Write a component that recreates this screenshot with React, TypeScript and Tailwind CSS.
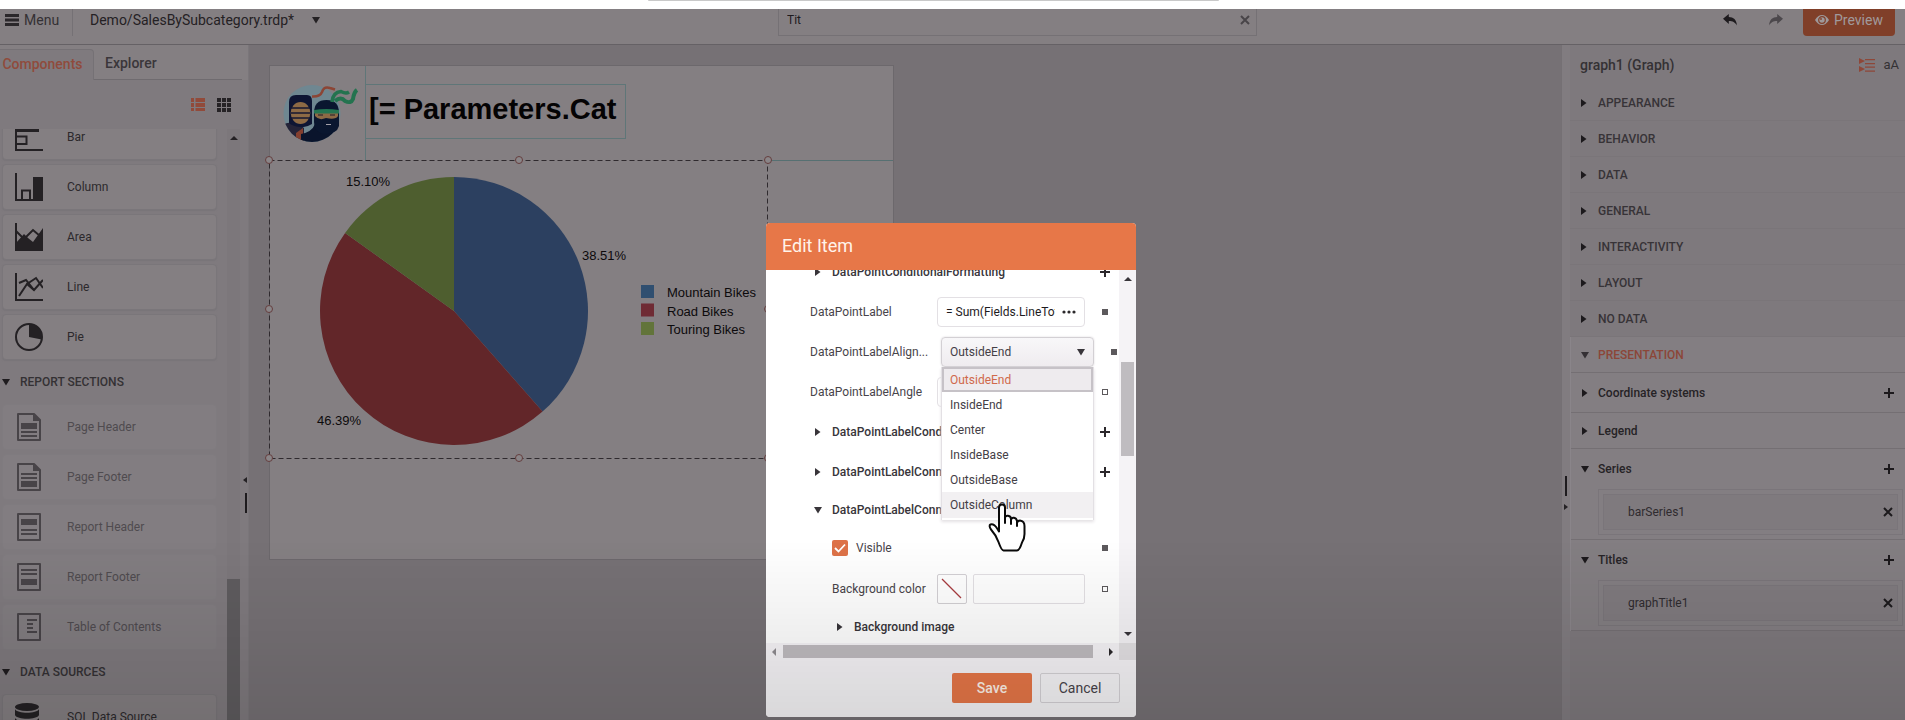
import React from "react";

const chartGlyphs: Record<string, React.ReactNode> = {
  Bar: (
    <>
      <path d="M1 0V27H28" fill="none" stroke="currentColor" strokeWidth="2" />
      <path d="M1 5H24V9H1z" fill="currentColor" />
      <path d="M1 13.5H11.5V21H1" fill="none" stroke="currentColor" strokeWidth="2" />
    </>
  ),
  Column: (
    <>
      <path d="M1 0V27H28" fill="none" stroke="currentColor" strokeWidth="2" />
      <path d="M7 27V17.5H15V27" fill="none" stroke="currentColor" strokeWidth="2" />
      <path d="M18 4H28V28H18z" fill="currentColor" />
    </>
  ),
  Area: (
    <>
      <path d="M1 0V28" stroke="currentColor" strokeWidth="2" />
      <path d="M1 20L9 11L13 15L18 19L28 5V28H0z" fill="currentColor" />
      <path d="M1 8L8 15M11 14L18 7L25 13" fill="none" stroke="currentColor" strokeWidth="2" />
    </>
  ),
  Line: (
    <>
      <path d="M1 0V27H28" fill="none" stroke="currentColor" strokeWidth="2" />
      <path d="M4 23L12 11L19 17L28 7" fill="none" stroke="currentColor" strokeWidth="2" />
      <path d="M4 10L11 7L19 17M12 11L21 5L28 15" fill="none" stroke="currentColor" strokeWidth="2" />
    </>
  ),
  Pie: (
    <>
      <circle cx="14" cy="14" r="13" fill="none" stroke="currentColor" strokeWidth="2" />
      <path d="M14 14V1A13 13 0 0 1 26.7 16.5z" fill="currentColor" />
    </>
  ),
  "Page Header": (
    <>
      <path d="M3 1H19L25 7V27H3z" fill="none" stroke="currentColor" strokeWidth="2" strokeLinejoin="round" />
      <path d="M18 1V8H26z" fill="currentColor" />
      <path d="M6 10H22V16H6z" fill="currentColor" />
      <path d="M6 19H22M6 23H22" stroke="currentColor" strokeWidth="2" />
    </>
  ),
  "Page Footer": (
    <>
      <path d="M3 1H19L25 7V27H3z" fill="none" stroke="currentColor" strokeWidth="2" strokeLinejoin="round" />
      <path d="M18 1V8H26z" fill="currentColor" />
      <path d="M6 18H22V24H6z" fill="currentColor" />
      <path d="M6 11H22M6 15H22" stroke="currentColor" strokeWidth="2" />
    </>
  ),
  "Report Header": (
    <>
      <path d="M3 1H25V27H3z" fill="none" stroke="currentColor" strokeWidth="2" strokeLinejoin="round" />
      <path d="M6 6H22V12H6z" fill="currentColor" />
      <path d="M6 17H22M6 21H22" stroke="currentColor" strokeWidth="2" />
    </>
  ),
  "Report Footer": (
    <>
      <path d="M3 1H25V27H3z" fill="none" stroke="currentColor" strokeWidth="2" strokeLinejoin="round" />
      <path d="M6 16H22V22H6z" fill="currentColor" />
      <path d="M6 7H22M6 11H22" stroke="currentColor" strokeWidth="2" />
    </>
  ),
  "Table of Contents": (
    <>
      <path d="M3 1H25V27H3z" fill="none" stroke="currentColor" strokeWidth="2" strokeLinejoin="round" />
      <path d="M12 7H22M12 11H18M12 15H18M12 19H22" stroke="currentColor" strokeWidth="2" />
    </>
  ),
  "SQL Data Source": (
    <>
      <ellipse cx="12" cy="4" rx="12" ry="4" fill="currentColor" />
      <path d="M0 6C2 11 22 11 24 6V12C22 17 2 17 0 12z" fill="currentColor" />
      <path d="M0 15C2 20 22 20 24 15V22C22 27 2 27 0 22z" fill="currentColor" />
    </>
  ),
};

function Caret({ open, className = "" }: { open?: boolean; className?: string }) {
  return (
    <svg viewBox="0 0 8 8" className={`h-2 w-2 shrink-0 ${className}`} fill="currentColor" aria-hidden="true">
      {open ? <path d="M0 1H8L4 7.5z" /> : <path d="M1 0L6.5 4L1 8z" />}
    </svg>
  );
}

function Plus() {
  return (
    <svg viewBox="0 0 10 10" className="h-2.5 w-2.5" stroke="currentColor" strokeWidth="2" aria-hidden="true">
      <path d="M5 0V10M0 5H10" />
    </svg>
  );
}

function Cross() {
  return (
    <svg viewBox="0 0 10 10" className="h-2.5 w-2.5" stroke="currentColor" strokeWidth="2" aria-hidden="true">
      <path d="M1 1L9 9M9 1L1 9" />
    </svg>
  );
}

function ToolItem({ name, disabled }: { name: string; disabled?: boolean }) {
  return (
    <button
      type="button"
      disabled={disabled}
      className={
        disabled
          ? "flex h-[46px] w-full shrink-0 items-center rounded-sm border border-[#7f7b7f] bg-[#827d81] pl-3 text-xs text-[#4f4b4f]"
          : "flex h-[46px] w-full shrink-0 items-center rounded-sm border border-[#7a767a] bg-[#847f82] pl-3 text-xs text-[#2c292c] shadow-[0_1px_1px_#797579]"
      }
    >
      <svg viewBox="0 0 28 28" className={disabled ? "mr-6 h-7 w-7 shrink-0 text-[#484448]" : "mr-6 h-7 w-7 shrink-0 text-[#242124]"} aria-hidden="true">
        {chartGlyphs[name]}
      </svg>
      {name}
    </button>
  );
}

function ToolSection({ title }: { title: string }) {
  return (
    <button type="button" className="flex h-11 shrink-0 items-center gap-2.5 text-xs font-medium text-[#343134]">
      <Caret open className="text-[#1f1c1f]" />
      {title}
    </button>
  );
}

function Toolbox() {
  return (
    <aside className="relative flex w-[249px] shrink-0 flex-col border-r border-[#7a767a] bg-[#7f7a7e]">
      <div role="tablist" className="flex h-[35px] shrink-0 items-end bg-[#847f82] pr-1.5 text-sm font-medium">
        <button role="tab" aria-selected="true" type="button" className="h-[31px] w-[94px] rounded-tr border-t border-r border-[#757175] bg-[#7f7a7e] pr-2 pb-0.5 text-center text-[#904b3c]">
          Components
        </button>
        <button role="tab" aria-selected="false" type="button" className="h-[31px] flex-1 border-b border-[#6f6b6f] pb-0.5 pl-[11px] text-left text-[#3a363a]">
          Explorer
        </button>
      </div>
      <div className="flex h-[49px] shrink-0 items-center justify-end gap-3 pr-[17px]">
        <button type="button" aria-label="List view" className="text-[#914a3a]">
          <svg viewBox="0 0 14 14" className="h-3.5 w-3.5" fill="currentColor">
            <path d="M0 0H3V4H0zM4.500 0H14V4H4.500zM0 5H3V9H0zM4.500 5H14V9H4.500zM0 10H3V13H0zM4.500 10H14V13H4.500z" />
          </svg>
        </button>
        <button type="button" aria-label="Grid view" className="text-[#262326]">
          <svg viewBox="0 0 14 14" className="h-3.5 w-3.5" fill="currentColor">
            <path d="M0 0H4V4H0zM5 0H9V4H5zM10 0H14V4H10zM0 5H4V9H0zM5 5H9V9H5zM10 5H14V9H10zM0 10H4V14H0zM5 10H9V14H5zM10 10H14V14H10z" />
          </svg>
        </button>
      </div>
      <div className="flex min-h-0 flex-1">
        <div className="flex flex-1 flex-col overflow-hidden pr-2.5 pl-0.5">
          <div className="-mt-[15px] flex flex-col gap-1">
            <ToolItem name="Bar" />
            <ToolItem name="Column" />
            <ToolItem name="Area" />
            <ToolItem name="Line" />
            <ToolItem name="Pie" />
          </div>
          <ToolSection title="REPORT SECTIONS" />
          <div className="flex flex-col gap-1">
            <ToolItem name="Page Header" disabled />
            <ToolItem name="Page Footer" disabled />
            <ToolItem name="Report Header" disabled />
            <ToolItem name="Report Footer" disabled />
            <ToolItem name="Table of Contents" disabled />
          </div>
          <ToolSection title="DATA SOURCES" />
          <ToolItem name="SQL Data Source" />
        </div>
        <div className="flex w-[13px] flex-col items-center bg-[#7c777b] pt-[7px]">
          <svg viewBox="0 0 8 4" className="h-1 w-2" fill="#242124">
            <path d="M0 4L4 0L8 4z" />
          </svg>
          <div className="mt-auto h-[141px] w-full bg-[#5f5c5f]" />
        </div>
        <div className="flex w-2 flex-col items-end bg-[#7f7a7e] pt-[348px] pr-px">
          <svg viewBox="0 0 4 6" className="h-1.5 w-1" fill="#242124">
            <path d="M4 0V6L0 3z" />
          </svg>
          <div className="mt-2.5 h-5 w-0.5 bg-[#1e1b1e]" />
        </div>
      </div>
    </aside>
  );
}

function Logo() {
  return (
    <svg viewBox="0 0 100 90" className="h-[90px] w-[100px] shrink-0" aria-label="Ninja logo">
      <defs>
        <clipPath id="disc">
          <circle cx="42" cy="47.500" r="28.500" />
        </clipPath>
      </defs>
      <circle cx="42" cy="47.500" r="28.500" fill="#6f8791" />
      <g clipPath="url(#disc)">
        <path d="M14 58Q24 54 34 62L34 78H24L14 68z" fill="#242338" />
        <path d="M26 67L33 62V78H26z" fill="#843f2f" />
        <path d="M31 78V68Q42 66 45 58H69V66Q60 78 42 78z" fill="#0a142c" />
      </g>
      <path d="M19 36Q19 29 26 29H37Q42 29 42 35V58Q36 62 30 61Q22 60 19 57z" fill="#0e1533" />
      <ellipse cx="30.500" cy="47" rx="9.800" ry="11" fill="#8d6a45" />
      <path d="M21 42H40M21 47H40M21 52H40" stroke="#161730" strokeWidth="1.300" />
      <path d="M44 47Q44 34 56.500 34Q69 34 69 47V60Q67 68 54 68Q44 66 44 56z" fill="#0a162f" />
      <path d="M45 47H68V50Q66 54 56 52Q49 55 45 50z" fill="#8d6a45" />
      <path d="M44 44Q56 42 69 44V47.500H44z" fill="#247552" />
      <path d="M48 49H53M60 49H65" stroke="#1c1c2c" strokeWidth="1" />
      <path d="M56 58.500H61" stroke="#a5a1aa" strokeWidth="1" />
      <path d="M42 30.500Q50 31 52 26Q54 20 60 22L65 23.500" fill="none" stroke="#8c4535" strokeWidth="2.500" />
      <path d="M62 36Q63 26 71 25.500Q76 28 79 26" fill="none" stroke="#24734f" strokeWidth="3.500" />
      <path d="M65 35Q71 30 75 35Q81 38 83 33Q84 26 87 24" fill="none" stroke="#24734f" strokeWidth="4" />
    </svg>
  );
}

const slices = [
  { name: "Mountain Bikes", share: 38.51, color: "#2c4060" },
  { name: "Road Bikes", share: 46.39, color: "#622629" },
  { name: "Touring Bikes", share: 15.1, color: "#4e5e2f" },
];
const legendColors = ["#304f70", "#6f2b34", "#62743a"];

function wedge(start: number, share: number) {
  const cx = 185;
  const cy = 151;
  const r = 134;
  const a = (start / 100) * 2 * Math.PI;
  const b = ((start + share) / 100) * 2 * Math.PI;
  const p = (t: number) => `${(cx + r * Math.sin(t)).toFixed(2)} ${(cy - r * Math.cos(t)).toFixed(2)}`;
  return `M${cx} ${cy}L${p(a)}A${r} ${r} 0 ${share > 50 ? 1 : 0} 1 ${p(b)}z`;
}

function Graph() {
  let start = 0;
  return (
    <svg viewBox="0 0 500 300" className="h-[300px] w-[500px] overflow-visible font-['Liberation_Sans',sans-serif] text-[13px]">
      {slices.map((s) => {
        const d = wedge(start, s.share);
        start += s.share;
        return <path key={s.name} d={d} fill={s.color} />;
      })}
      <g fill="#0c0a0c">
        <text x="77" y="26">15.10%</text>
        <text x="313" y="100">38.51%</text>
        <text x="48" y="265">46.39%</text>
      </g>
      {slices.map((s, i) => (
        <g key={s.name}>
          <rect x="372" y={125 + i * 18.5} width="13" height="13" fill={legendColors[i]} />
          <text x="398" y={137 + i * 18.5} fill="#0c0a0c">{s.name}</text>
        </g>
      ))}
      <rect x="0.5" y="0.5" width="498" height="298" fill="none" stroke="#2f2a2e" strokeDasharray="5 3" />
      {[[0, 0], [250, 0], [499, 0], [0, 149], [499, 149], [0, 298], [250, 298], [499, 298]].map(([x, y]) => (
        <circle key={`${x}-${y}`} cx={x} cy={y} r="3.500" fill="#8a8588" stroke="#653e3e" />
      ))}
    </svg>
  );
}

function Designer() {
  return (
    <main className="flex-1 overflow-hidden bg-[#767175] pt-5 pl-5">
      <div className="relative h-[495px] w-[625px] border border-[#6c686c] bg-[#847f82]">
        <div className="absolute top-0 left-0 flex h-[95px] w-[96px] border-r border-[#5f7678]">
          <Logo />
        </div>
        <div className="absolute top-[18px] left-[95px] flex h-[55px] w-[261px] items-center border border-[#5f7678] pb-1 pl-[3px] font-['Liberation_Sans',sans-serif] text-[29px] font-bold whitespace-nowrap text-[#040304]">
          [= Parameters.Cat
        </div>
        <div className="absolute top-[94px] right-0 left-[498px] h-px bg-[#567072]" />
        <div className="absolute top-[94px] -left-px">
          <Graph />
        </div>
      </div>
    </main>
  );
}

function SeriesBox({ name }: { name: string }) {
  return (
    <div className="mr-0.5 mb-1 ml-[27px] border border-[#7a757a] p-1">
      <div className="flex h-9 items-center justify-between border border-[#7a757a] bg-[#7f7a7e] pr-1 pl-6 text-xs text-[#2f2b2f]">
        {name}
        <button type="button" aria-label={`Remove ${name}`} className="text-[#1d1a1d]">
          <Cross />
        </button>
      </div>
    </div>
  );
}

function Group({ title, open, add, height, children }: { title: string; open?: boolean; add?: boolean; height: string; children?: React.ReactNode }) {
  return (
    <div className="border-b border-[#746f73]">
      <div className={`flex items-center pr-[11px] pl-2.5 text-xs font-medium text-[#262326] ${height}`}>
        <button type="button" className="flex flex-1 items-center gap-[9px] text-left">
          <Caret open={open} className="text-[#1c191c]" />
          {title}
        </button>
        {add && (
          <button type="button" aria-label={`Add ${title}`} className="text-[#1c191c]">
            <Plus />
          </button>
        )}
      </div>
      {children}
    </div>
  );
}

function Properties() {
  return (
    <aside className="flex w-[344px] shrink-0 border-l border-[#757074] bg-[#7e797d]">
      <div className="flex w-2 shrink-0 flex-col items-center bg-[#817c80] pt-[431px]">
        <div className="h-5 w-0.5 bg-[#1e1b1e]" />
        <svg viewBox="0 0 4 6" className="mt-2 h-1.5 w-1" fill="#242124">
          <path d="M0 0V6L4 3z" />
        </svg>
      </div>
      <div className="flex min-w-0 flex-1 flex-col">
        <div className="flex h-10 shrink-0 items-center pr-1.5 pl-2.5 text-[#343134]">
          <h2 className="flex-1 text-sm font-medium">graph1 (Graph)</h2>
          <button type="button" aria-label="Group by category" className="mr-2 text-[#8e4738]">
            <svg viewBox="0 0 16 14" className="h-3.5 w-4" fill="currentColor">
              <path d="M0 0L6 3L0 6zM0 8L6 11L0 14zM6 1H16V2.200H6zM6 5H16V6.200H6zM6 8.500H16V9.700H6zM6 12.500H16V13.700H6z" />
            </svg>
          </button>
          <button type="button" aria-label="Sort alphabetically" className="text-[13px]">aA</button>
        </div>
        {["APPEARANCE", "BEHAVIOR", "DATA", "GENERAL", "INTERACTIVITY", "LAYOUT", "NO DATA"].map((t) => (
          <button key={t} type="button" className="flex h-9 shrink-0 items-center gap-2.5 border-b border-[#7a7579] pl-2.5 text-xs font-medium text-[#373337]">
            <Caret className="text-[#1c191c]" />
            {t}
          </button>
        ))}
        <div className="border-l border-[#8a858a] bg-[#837e82]">
          <button type="button" className="flex h-9 w-full items-center gap-[9px] border-b border-[#746f73] pl-2.5 text-xs font-medium text-[#8c4638]">
            <Caret open className="text-[#343034]" />
            PRESENTATION
          </button>
          <Group title="Coordinate systems" add height="h-[39px]" />
          <Group title="Legend" height="h-[35px]" />
          <Group title="Series" open add height="h-10">
            <SeriesBox name="barSeries1" />
          </Group>
          <Group title="Titles" open add height="h-10">
            <SeriesBox name="graphTitle1" />
          </Group>
        </div>
      </div>
    </aside>
  );
}

function TopBar() {
  return (
    <header className="h-9 shrink-0 overflow-hidden border-b border-[#656165] bg-[#847f82]">
      <div className="-mt-[5px] grid h-8 grid-cols-[778fr_479fr_648fr] items-center">
        <div className="flex h-full items-center text-sm text-[#343134]">
          <button type="button" className="flex h-full w-[72px] items-center gap-[5px] pl-[5px]">
            <svg viewBox="0 0 14 12" className="h-3 w-3.5" fill="#2a272a" aria-hidden="true">
              <path d="M0 0H14V3H0zM0 4.500H14V7.500H0zM0 9H14V12H0z" />
            </svg>
            Menu
          </button>
          <span className="h-full w-px bg-[#757175]" />
          <button type="button" className="ml-[17px] flex items-center gap-[18px] text-[#242124]">
            Demo/SalesBySubcategory.trdp*
            <Caret open />
          </button>
        </div>
        <div className="flex h-full items-center border border-[#757175] pr-1.5 pl-2">
          <input aria-label="Search" defaultValue="Tit" className="min-w-0 flex-1 bg-transparent text-xs text-[#1e1b1e] outline-none" />
          <button type="button" aria-label="Clear search" className="text-[#494549]">
            <Cross />
          </button>
        </div>
        <div className="flex h-full items-center justify-end pr-2.5">
          <button type="button" aria-label="Undo" className="mr-8 text-[#1e1b1e]">
            <svg viewBox="0 0 14 12" className="h-3 w-3.5" fill="currentColor">
              <path d="M0 4.800L5.800 0V3C10.500 3.100 13.500 5.500 14 11.500C12 8.200 9.800 7 5.800 7V10z" />
            </svg>
          </button>
          <button type="button" aria-label="Redo" className="mr-5 text-[#4c484c]">
            <svg viewBox="0 0 14 12" className="h-3 w-3.5" fill="currentColor">
              <path d="M14 4.800L8.200 0V3C3.500 3.100 0.500 5.500 0 11.500C2 8.200 4.200 7 8.200 7V10z" />
            </svg>
          </button>
          <button type="button" className="flex h-full w-[92px] items-center justify-center gap-[5px] rounded-sm bg-[#803f29] text-sm text-[#a09a9c]">
            <svg viewBox="0 0 14 10" className="h-2.5 w-3.5" aria-hidden="true">
              <path d="M0 5Q3 0 7 0T14 5Q11 10 7 10T0 5z" fill="#9e989a" />
              <circle cx="7" cy="5" r="3.300" fill="none" stroke="#803f29" strokeWidth="1.200" />
              <circle cx="6" cy="4" r="0.900" fill="#803f29" />
            </svg>
            Preview
          </button>
        </div>
      </div>
    </header>
  );
}

function Marker({ filled }: { filled?: boolean }) {
  return <span className={filled ? "block h-1.5 w-1.5 bg-[#5c595c]" : "block h-1.5 w-1.5 border border-[#5c595c]"} />;
}

function Row({ children, end, className = "h-10" }: { children: React.ReactNode; end?: React.ReactNode; className?: string }) {
  return (
    <div className={`flex shrink-0 items-center ${className}`}>
      {children}
      {end && <div className="ml-auto flex w-7 justify-center">{end}</div>}
    </div>
  );
}

function TreeToggle({ title, open }: { title: string; open?: boolean }) {
  return (
    <button type="button" className="flex items-center gap-2.5 pl-1 font-medium text-[#38353a]">
      <Caret open={open} />
      {title}
    </button>
  );
}

const addButton = (
  <button type="button" aria-label="Add" className="text-[#2b282b]">
    <Plus />
  </button>
);

function AlignmentSelect() {
  const options = ["OutsideEnd", "InsideEnd", "Center", "InsideBase", "OutsideBase", "OutsideColumn"];
  return (
    <div className="relative">
      <select
        id="label-alignment"
        defaultValue="OutsideEnd"
        className="block h-[30px] w-[153px] appearance-none rounded-sm border border-[#d3d0d4] bg-linear-to-b from-[#f8f7f9] to-[#efecef] pl-2 text-xs text-[#444046] shadow-[0_0_2px_#d8d5d8] outline-none"
      >
        {options.map((o) => (
          <option key={o}>{o}</option>
        ))}
      </select>
      <Caret open className="pointer-events-none absolute top-[11px] right-[9px] text-[#38353a]" />
      <ul role="listbox" aria-label="Alignment options" className="absolute top-[30px] left-0 z-10 w-[153px] border-x border-[#e3e0e4] bg-white pb-0.5 text-[#444046] shadow-[0_2px_3px_#e4e1e4]">
        {options.map((o, i) => (
          <li
            key={o}
            role="option"
            aria-selected={i === 0}
            className={
              i === 0
                ? "flex h-[25px] items-center border-2 border-[#c6c2c7] bg-[#eeebee] pl-1.5 text-[#d0694b]"
                : i === 5
                  ? "flex h-[26px] items-center bg-[#f2f0f2] pl-2"
                  : "flex h-[25px] items-center pl-2"
            }
          >
            {o}
          </li>
        ))}
      </ul>
      <svg viewBox="0 0 38 49" className="absolute top-[166px] left-[47px] z-20 h-[49px] w-[38px]" aria-hidden="true">
        <path
          d="M11 25V4.500Q11 1.500 14 1.500T17 4.500V20V15.500Q17 12.500 20 12.800T23 16V21V17Q23.500 14.500 26 14.800T29 18V23V20Q29.500 17.500 32 17.500Q36.500 18 36.500 23V31Q36.500 36 34 39.500Q31.500 47.500 29 47.500H15.500Q13.500 47.500 10.500 39Q8 32 3 26.500Q0.500 22.500 2.500 21.500Q6 20.500 9.500 26L11 28.500z"
          fill="#fff"
          stroke="#0a0a0a"
          strokeWidth="2"
          strokeLinejoin="round"
        />
      </svg>
    </div>
  );
}

function EditDialog() {
  return (
    <section role="dialog" aria-labelledby="dialog-title" className="flex w-[370px] flex-col overflow-hidden rounded-sm bg-white text-xs text-[#48444a]">
      <h1 id="dialog-title" className="flex h-[47px] shrink-0 items-center bg-[#e77748] pb-0.5 pl-4 text-lg text-[#fff3ea]">
        Edit Item
      </h1>
      <div className="flex h-[373px]">
        <div className="flex min-w-0 flex-1 flex-col overflow-hidden pl-11">
          <div className="-mt-[18px] flex flex-col">
            <Row end={addButton}><TreeToggle title="DataPointConditionalFormatting" /></Row>
            <Row end={<Marker filled />}>
              <label htmlFor="point-label" className="w-[127px]">DataPointLabel</label>
              <div className="flex h-[30px] w-[148px] items-center rounded-sm border border-[#e3e0e4] pr-2 pl-2">
                <input id="point-label" defaultValue="= Sum(Fields.LineTotal)" className="w-[109px] flex-none text-[#1e1b1e] outline-none" />
                <button type="button" aria-label="Edit expression" className="ml-auto">
                  <svg viewBox="0 0 14 4" className="h-1 w-3.5" fill="#2b282b">
                    <circle cx="2" cy="2" r="1.600" />
                    <circle cx="7" cy="2" r="1.600" />
                    <circle cx="12" cy="2" r="1.600" />
                  </svg>
                </button>
              </div>
            </Row>
            <Row>
              <label htmlFor="label-alignment" className="w-[131px]">DataPointLabelAlign...</label>
              <AlignmentSelect />
              <div className="ml-auto pr-0.5"><Marker filled /></div>
            </Row>
            <Row end={<Marker />}>
              <label htmlFor="label-angle" className="w-[127px]">DataPointLabelAngle</label>
              <input id="label-angle" className="h-[30px] w-[148px] rounded-sm border border-[#e3e0e4]" />
            </Row>
            <Row end={addButton}><TreeToggle title="DataPointLabelCond..." /></Row>
            <Row end={addButton}><TreeToggle title="DataPointLabelConn..." /></Row>
            <Row className="h-9"><TreeToggle title="DataPointLabelConn..." open /></Row>
            <Row end={<Marker filled />}>
              <label className="flex items-center gap-2 pl-[22px]">
                <span className="relative flex h-4 w-4">
                  <input type="checkbox" defaultChecked className="h-4 w-4 appearance-none rounded-xs bg-[#dd7248]" />
                  <svg viewBox="0 0 16 16" className="pointer-events-none absolute inset-0" fill="none" stroke="#fff" strokeWidth="1.800">
                    <path d="M3 8L6.500 11.500L13 4.500" />
                  </svg>
                </span>
                Visible
              </label>
            </Row>
            <Row className="h-[42px]" end={<Marker />}>
              <label htmlFor="bg-color" className="w-[127px] pl-[22px]">Background color</label>
              <button type="button" aria-label="Pick color" className="h-[30px] w-[30px] rounded-xs border border-[#d3d0d4]">
                <svg viewBox="0 0 28 28" className="h-7 w-7" stroke="#a83c40" strokeWidth="1.200">
                  <path d="M4 4L23 23" />
                </svg>
              </button>
              <input id="bg-color" className="ml-1.5 h-[30px] w-[112px] rounded-xs border border-[#e3e0e4]" />
            </Row>
            <Row className="h-[34px]">
              <div className="pl-[22px]"><TreeToggle title="Background image" /></div>
            </Row>
          </div>
        </div>
        <div className="flex w-[17px] flex-col items-center bg-[#f5f3f6] pt-[7px] pb-[7px]">
          <svg viewBox="0 0 8 4" className="h-1 w-2" fill="#38353a"><path d="M0 4L4 0L8 4z" /></svg>
          <div className="mt-[81px] h-[94px] w-[13px] bg-[#bfbcc0]" />
          <svg viewBox="0 0 8 4" className="mt-auto h-1 w-2" fill="#38353a"><path d="M0 0H8L4 4z" /></svg>
        </div>
      </div>
      <div className="flex h-[17px] shrink-0 bg-[#f7f5f8]">
        <div className="flex flex-1 items-center pr-1.5 pl-1.5">
          <svg viewBox="0 0 4 8" className="h-2 w-1" fill="#8f8c90"><path d="M4 0V8L0 4z" /></svg>
          <div className="ml-[7px] h-[13px] w-[310px] bg-[#c0bcc0]" />
          <svg viewBox="0 0 4 8" className="ml-auto h-2 w-1" fill="#2b282b"><path d="M0 0V8L4 4z" /></svg>
        </div>
        <div className="w-[17px] bg-[#e4e1e4]" />
      </div>
      <div className="flex h-[57px] shrink-0 items-center justify-end gap-2 bg-[#f7f5f8] pr-4 pb-0.5 text-sm">
        <button type="button" className="h-[30px] w-20 rounded-xs bg-[#e77748] font-medium text-[#fff3ea]">Save</button>
        <button type="button" className="h-[30px] w-20 rounded-xs border border-[#d6d3d7] text-[#48444a]">Cancel</button>
      </div>
    </section>
  );
}

export default function App() {
  return (
    <div className="flex h-screen flex-col overflow-hidden bg-[#7e797d] font-[Roboto,sans-serif]">
      <div className="h-[9px] shrink-0 bg-white">
        <div className="ml-[34%] h-px w-[30%] rounded-b bg-[#c9c9c9]" />
      </div>
      <TopBar />
      <div className="flex min-h-0 flex-1">
        <Toolbox />
        <Designer />
        <Properties />
      </div>
      <div className="fixed inset-0 flex items-start justify-center pt-[223px] pr-[3px]">
        <EditDialog />
      </div>
      <div className="pointer-events-none fixed inset-x-0 bottom-0 h-[180px] bg-linear-to-b from-transparent to-black/12" />
    </div>
  );
}
